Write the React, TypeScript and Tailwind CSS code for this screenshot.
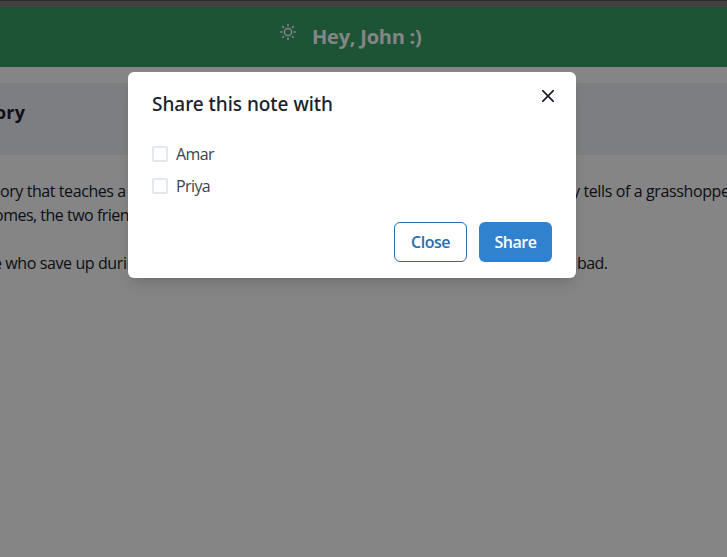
import React from "react";

const people = ["Amar", "Priya"];

function SunIcon() {
  return (
    <svg viewBox="0 0 16 16" className="mt-[17px] h-4 w-4 shrink-0" fill="none" stroke="white" strokeWidth="1.5">
      <circle cx="8" cy="8" r="3.6" />
      <path d="M8 0v2.5M8 13.5V16M0 8h2.5M13.5 8H16M2.3 2.3l1.7 1.7M12 12l1.7 1.7M2.3 13.7L4 12M12 4l1.7-1.7" />
    </svg>
  );
}

function Note() {
  return (
    <main className="h-[557px] w-[727px] overflow-hidden bg-white text-[#1a202c]">
      <div className="h-[7px] border-t border-[#535353] bg-[#7f7f7f]" />
      <header className="flex h-[60px] bg-[#38a169] pl-[280px] text-white">
        <SunIcon />
        <h1 className="ml-4 pt-[15px] text-[20px] leading-[30px] font-bold tracking-[-0.23px] whitespace-nowrap">Hey, John :)</h1>
      </header>
      <section className="mt-4 h-[72px] bg-[#edf2f7] pt-[17px]">
        <h2 className="-ml-[5px] text-[18px] leading-6 font-bold tracking-[0.2px]">ory</h2>
      </section>
      <div className="pt-6 text-[16px] leading-6 whitespace-nowrap">
        <div className="flex">
          <span className="w-[572px] shrink-0 tracking-[-0.42px]">ory that teaches a</span>
          <span className="tracking-[-0.38px]">y tells of a grasshopper</span>
        </div>
        <div className="-ml-[6px] tracking-[-0.5px]">omes, the two friends</div>
        <div className="mt-6 flex">
          <span className="-ml-[7px] w-[584px] shrink-0 tracking-[-0.4px]">e who save up during</span>
          <span className="tracking-[-0.6px]">bad.</span>
        </div>
      </div>
    </main>
  );
}

function ShareDialog() {
  return (
    <div role="dialog" className="relative h-[206px] w-[448px] rounded-md bg-white text-[#1a202c] shadow-lg">
      <button aria-label="Close dialog" className="absolute top-2 right-3 flex h-8 w-8 items-center justify-center">
        <svg viewBox="0 0 12 12" className="h-3 w-3" fill="none" stroke="#1a202c" strokeWidth="1.7" strokeLinecap="round">
          <path d="M.7.7l10.6 10.6M11.3.7L.7 11.3" />
        </svg>
      </button>
      <h2 className="px-6 pt-[17px] pb-4 font-['Noto_Sans','Open_Sans',sans-serif] text-[19px] leading-[30px] font-medium tracking-[-0.03px]">Share this note with</h2>
      <div className="flex flex-col gap-2 px-6 pt-[7px]">
        {people.map((name) => (
          <label key={name} className="flex h-6 items-center gap-2 text-[16px] tracking-[-0.6px] text-[#3c4250]">
            <span className="h-4 w-4 rounded-xs border-2 border-[#e2e8f0]" />
            {name}
          </label>
        ))}
      </div>
      <footer className="flex justify-end gap-3 px-6 pt-6 text-[16px] font-semibold tracking-[-0.5px]">
        <button className="h-10 w-[73px] rounded-md border border-[#2b6cb0] text-[#2b6cb0]">Close</button>
        <button className="h-10 w-[73px] rounded-md bg-[#3182ce] text-white">Share</button>
      </footer>
    </div>
  );
}

export default function App() {
  return (
    <div className="relative h-[557px] w-[727px] overflow-hidden font-['Open_Sans','Noto_Sans',sans-serif]">
      <Note />
      <div className="absolute inset-0 flex items-start bg-black/48 pt-[72px] pl-32">
        <ShareDialog />
      </div>
    </div>
  );
}
